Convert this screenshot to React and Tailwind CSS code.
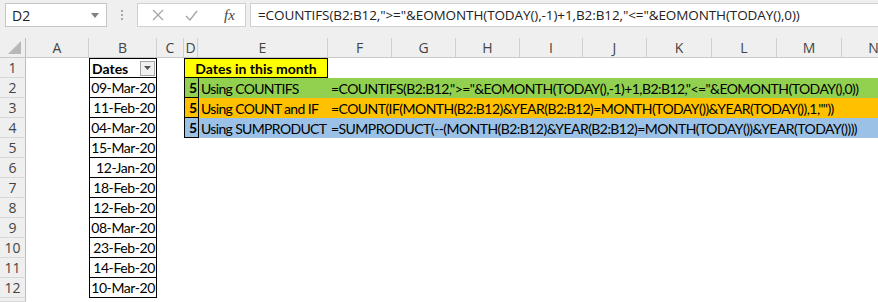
import React from 'react';

const cols = [
  { l: 'A', w: 'w-[63px]' },
  { l: 'B', w: 'w-[68px]' },
  { l: 'C', w: 'w-[27px]' },
  { l: 'D', w: 'w-[14px]' },
  { l: 'E', w: 'w-[130px]' },
  { l: 'F', w: 'w-[64px]' },
  { l: 'G', w: 'w-[64px]' },
  { l: 'H', w: 'w-[64px]' },
  { l: 'I', w: 'w-[63px]' },
  { l: 'J', w: 'w-[64px]' },
  { l: 'K', w: 'w-[65px]' },
  { l: 'L', w: 'w-[65px]' },
  { l: 'M', w: 'w-[65px]' },
  { l: 'N', w: 'w-[64px]' },
];

const dates = [
  '09-Mar-20', '11-Feb-20', '04-Mar-20', '15-Mar-20', '12-Jan-20', '18-Feb-20',
  '12-Feb-20', '08-Mar-20', '23-Feb-20', '14-Feb-20', '10-Mar-20',
];

const methods = [
  {
    bg: 'bg-[#92d050]',
    label: 'Using COUNTIFS',
    formula: '=COUNTIFS(B2:B12,">="&EOMONTH(TODAY(),-1)+1,B2:B12,"<="&EOMONTH(TODAY(),0))',
  },
  {
    bg: 'bg-[#ffc000]',
    label: 'Using COUNT and IF',
    formula: '=COUNT(IF(MONTH(B2:B12)&YEAR(B2:B12)=MONTH(TODAY())&YEAR(TODAY()),1,""))',
  },
  {
    bg: 'bg-[#9bc2e6]',
    label: 'Using SUMPRODUCT',
    formula: '=SUMPRODUCT(--(MONTH(B2:B12)&YEAR(B2:B12)=MONTH(TODAY())&YEAR(TODAY())))',
  },
];

const cellFont = "font-['Lato','Liberation_Sans',sans-serif] text-[14px] text-black";

const RowHeader = ({ n, short }) => (
  <div
    className={`w-[26px] shrink-0 ${short ? 'h-[4px]' : 'h-[20px]'} bg-[#efefef] border-r border-b border-r-[#bdbdbd] border-b-[#d8d8d8] flex items-center justify-center text-[14px] text-[#444] font-['Open_Sans',sans-serif]`}
  >
    {n}
  </div>
);

const DateCell = ({ children, first }) => (
  <div
    className={`w-[68px] shrink-0 h-[20px] border-x border-b border-black ${first ? 'border-t' : ''} flex items-center overflow-hidden`}
  >
    {children}
  </div>
);

const Toolbar = () => (
  <div className="h-[38px] bg-[#efefef] flex items-start pt-[3px]">
    <div className="ml-[5px] w-[102px] h-[24px] bg-white border border-[#c6c6c6] flex items-center justify-between pl-[6px] pr-[7px]">
      <span className="text-[14px] text-[#222] font-['Open_Sans',sans-serif]">D2</span>
      <svg width="8" height="5" viewBox="0 0 8 5">
        <path d="M0 0 L8 0 L4 5 Z" fill="#808080" />
      </svg>
    </div>
    <div className="w-[30px] h-[24px] flex flex-col items-center justify-center gap-[2px]">
      <span className="w-[2px] h-[2px] bg-[#a8a8a8]" />
      <span className="w-[2px] h-[2px] bg-[#a8a8a8]" />
      <span className="w-[2px] h-[2px] bg-[#a8a8a8]" />
    </div>
    <div className="w-[109px] h-[24px] bg-white border border-[#d0d0d0] flex items-center">
      <div className="w-[40px] flex justify-center">
        <svg width="12" height="12" viewBox="0 0 12 12">
          <path d="M1 1 L11 11 M11 1 L1 11" stroke="#a6a6a6" strokeWidth="1.3" fill="none" />
        </svg>
      </div>
      <div className="w-[26px] flex justify-center">
        <svg width="13" height="11" viewBox="0 0 13 11">
          <path d="M1 6 L5 10 L12 1" stroke="#a6a6a6" strokeWidth="1.4" fill="none" />
        </svg>
      </div>
      <div className="flex-1 flex justify-center pl-[10px]">
        <span className="italic text-[15px] text-[#444] font-['Liberation_Serif',serif]">fx</span>
      </div>
    </div>
    <div className="ml-[4px] flex-1 h-[24px] bg-white border border-r-0 border-[#d0d0d0] flex items-center pl-[7px] whitespace-nowrap overflow-hidden">
      <span className="text-[13.5px] text-[#222] font-['Open_Sans',sans-serif] tracking-[-0.1px]">
        {methods[0].formula}
      </span>
    </div>
  </div>
);

const HeaderRow = () => (
  <div className="h-[20px] flex bg-[#efefef] border-b border-[#c8c8c8]">
    <div className="w-[26px] shrink-0 border-r border-[#bdbdbd] flex items-end justify-end pr-[4px] pb-[3px]">
      <svg width="13" height="13" viewBox="0 0 13 13">
        <path d="M13 0 L13 13 L0 13 Z" fill="#b8b8b8" />
      </svg>
    </div>
    {cols.map((c) => (
      <div
        key={c.l}
        className={`${c.w} shrink-0 border-r border-[#d0d0d0] flex items-center justify-center text-[14px] text-[#444] font-['Open_Sans',sans-serif]`}
      >
        {c.l}
      </div>
    ))}
  </div>
);

export default function App() {
  return (
    <div className="w-[878px] h-[302px] overflow-hidden bg-white">
      <Toolbar />
      <HeaderRow />
      <div className={cellFont}>
        {/* row 1 */}
        <div className="flex h-[20px]">
          <RowHeader n={1} />
          <div className="w-[63px] shrink-0" />
          <DateCell first>
            <div className="flex-1 flex items-center justify-between pl-[2px] pr-[1px]">
              <span className="font-bold">Dates</span>
              <span className="w-[15px] h-[15px] bg-[#f0f0f0] border border-[#a5a5a5] flex items-center justify-center">
                <svg width="7" height="4" viewBox="0 0 7 4">
                  <path d="M0 0 L7 0 L3.5 4 Z" fill="#555" />
                </svg>
              </span>
            </div>
          </DateCell>
          <div className="w-[27px] shrink-0" />
          <div className="w-[144px] shrink-0 h-[20px] bg-[#ffff00] border border-black flex items-center justify-center font-bold">
            Dates in this month
          </div>
        </div>
        {/* rows 2-12 */}
        {dates.map((d, i) => {
          const m = methods[i];
          return (
            <div key={d + i} className="flex h-[20px]">
              <RowHeader n={i + 2} />
              <div className="w-[63px] shrink-0" />
              <DateCell>
                <span className="flex-1 text-right pr-[1px] whitespace-nowrap tracking-[-0.4px]">{d}</span>
              </DateCell>
              <div className="w-[27px] shrink-0" />
              {m && (
                <div className={`flex-1 flex ${m.bg}`}>
                  <div className="w-[15px] shrink-0 h-[20px] border-x border-b border-black flex items-center justify-end pr-[1px] font-bold">
                    5
                  </div>
                  <div className="w-[129px] shrink-0 flex items-center pl-[2px] whitespace-nowrap tracking-[-0.65px]">
                    {m.label}
                  </div>
                  <div className="flex-1 flex items-center pl-[3px] whitespace-nowrap tracking-[-0.55px]">
                    {m.formula}
                  </div>
                </div>
              )}
            </div>
          );
        })}
        {/* row 13 partial */}
        <div className="flex h-[4px]">
          <RowHeader n="" short />
        </div>
      </div>
    </div>
  );
}
